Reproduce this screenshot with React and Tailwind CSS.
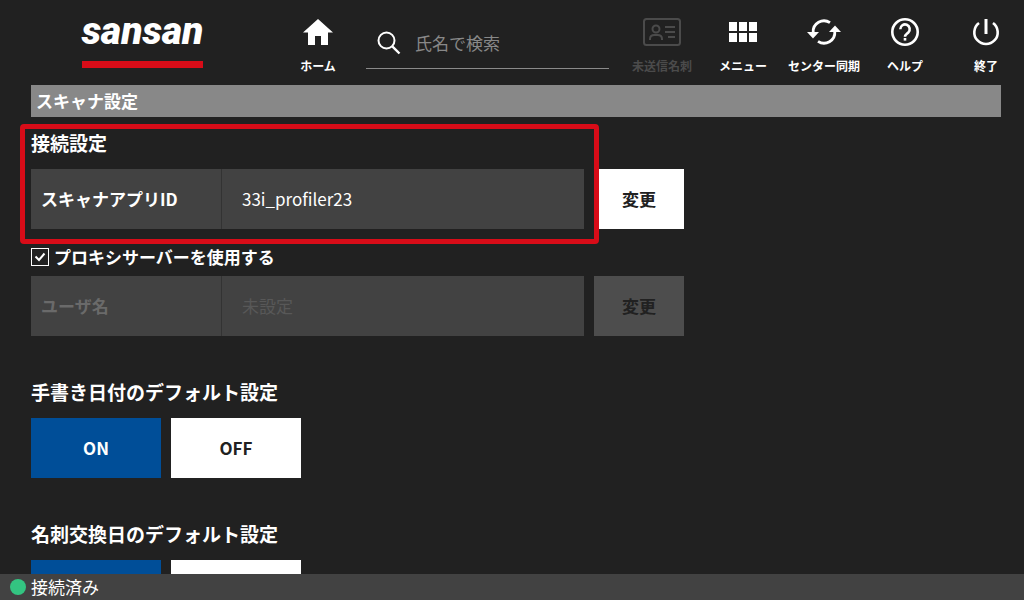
import { useState } from 'react'

function HomeIcon() {
  return (
    <svg width="32" height="32" viewBox="0 0 32 32" fill="currentColor" aria-hidden="true">
      <path d="M16 3 31 16.500h-5V29h-7v-9h-6v9H6V16.500H1z" />
    </svg>
  )
}

function SearchIcon() {
  return (
    <svg width="24" height="24" viewBox="0 0 24 24" fill="none" stroke="currentColor" strokeWidth="2" aria-hidden="true">
      <circle cx="9.500" cy="9.500" r="8" />
      <path d="M15.300 15.300 22.500 22.500" strokeWidth="2.400" />
    </svg>
  )
}

function CardIcon() {
  return (
    <svg width="38" height="32" viewBox="0 0 38 32" fill="none" stroke="currentColor" strokeWidth="2" aria-hidden="true">
      <rect x="1" y="3" width="36" height="26" rx="2.500" />
      <circle cx="13" cy="13" r="3.500" />
      <path d="M7 24v-1c0-2.800 2-4 4.500-4h3c2.500 0 4.500 1.200 4.500 4v1" />
      <path d="M22 11h10M22 16h10M25 21h7" />
    </svg>
  )
}

function MenuIcon() {
  return (
    <svg width="28" height="32" viewBox="0 0 28 32" fill="currentColor" aria-hidden="true">
      <path d="M0 6h8v9H0zM10 6h8v9h-8zM20 6h8v9h-8zM0 17h8v9H0zM10 17h8v9h-8zM20 17h8v9h-8z" />
    </svg>
  )
}

function SyncIcon() {
  return (
    <svg width="34" height="32" viewBox="0 0 34 32" fill="none" stroke="currentColor" strokeWidth="2.800" aria-hidden="true">
      <path d="M23 6.700A10.800 10.800 0 0 0 6.200 16.500" />
      <path d="M11 25.300A10.800 10.800 0 0 0 27.800 15.500" />
      <path d="M0 16h12l-6 6.500z" fill="currentColor" stroke="none" />
      <path d="M22 16h12l-6-6.500z" fill="currentColor" stroke="none" />
    </svg>
  )
}

function HelpIcon() {
  return (
    <svg width="32" height="32" viewBox="0 0 32 32" fill="none" stroke="currentColor" strokeWidth="2.600" aria-hidden="true">
      <circle cx="16" cy="16" r="12.700" />
      <path d="M11.300 13.200a4.700 4.700 0 1 1 8 3.300c-1.700 1.600-3.300 2.300-3.300 4.300" />
      <path d="M16 22v2.600" />
    </svg>
  )
}

function PowerIcon() {
  return (
    <svg width="32" height="32" viewBox="0 0 32 32" fill="none" stroke="currentColor" strokeWidth="2.600" aria-hidden="true">
      <path d="M9 7a11.700 11.700 0 1 0 14 0" />
      <path d="M16 3v15" strokeWidth="3" />
    </svg>
  )
}

const NAV = [
  { label: '未送信名刺', icon: CardIcon, disabled: true },
  { label: 'メニュー', icon: MenuIcon },
  { label: 'センター同期', icon: SyncIcon },
  { label: 'ヘルプ', icon: HelpIcon },
  { label: '終了', icon: PowerIcon },
]

function NavButton({ label, icon: Icon, disabled }) {
  return (
    <button
      type="button"
      disabled={disabled}
      className="flex w-[76px] shrink-0 flex-col items-center gap-[10px] pt-4 text-white disabled:text-[#4b4b4b]"
    >
      <Icon />
      <span className="whitespace-nowrap text-xs leading-4 font-bold">{label}</span>
    </button>
  )
}

function SettingRow({ label, value, disabled }) {
  return (
    <div className="flex h-[60px] gap-[10px]">
      <dl className="flex flex-1 bg-[#424242]">
        <dt
          className={`flex w-[191px] items-center border-r border-[#333] pl-[10px] font-bold ${
            disabled ? 'text-[#6a6a6a]' : 'text-white'
          }`}
        >
          {label}
        </dt>
        <dd className={`flex flex-1 items-center pl-5 ${disabled ? 'text-[#585858]' : 'text-white'}`}>{value}</dd>
      </dl>
      <button
        type="button"
        disabled={disabled}
        className="w-[90px] bg-white font-bold text-[#212121] disabled:bg-[#4d4d4d]"
      >
        変更
      </button>
    </div>
  )
}

function OnOffSetting({ title }) {
  const [on, setOn] = useState(true)
  const active = 'bg-[#004e98] text-white'
  const inactive = 'bg-white text-[#212121]'

  return (
    <section className="mt-[42px]">
      <h2 className="text-[19px] leading-7 font-bold">{title}</h2>
      <div className="mt-3 flex gap-[10px]">
        <button
          type="button"
          aria-pressed={on}
          onClick={() => setOn(true)}
          className={`h-[60px] w-[130px] font-bold ${on ? active : inactive}`}
        >
          ON
        </button>
        <button
          type="button"
          aria-pressed={!on}
          onClick={() => setOn(false)}
          className={`h-[60px] w-[130px] font-bold ${on ? inactive : active}`}
        >
          OFF
        </button>
      </div>
    </section>
  )
}

export default function App() {
  const [proxy, setProxy] = useState(true)

  return (
    <div
      lang="ja"
      className="flex h-screen flex-col bg-[#212121] font-['Noto_Sans_CJK_JP',sans-serif] text-[17px] leading-6 text-white"
    >
      <header className="flex h-[85px] shrink-0 items-start pl-[82px]">
        <a
          href="#"
          className="flex h-[68px] w-[121px] shrink-0 items-end justify-center border-b-[7px] border-[#d80c18] pb-2 font-['Roboto',sans-serif] text-[39px] leading-[44px] font-black italic"
        >
          sansan
        </a>
        <div className="ml-[77px]">
          <NavButton label="ホーム" icon={HomeIcon} />
        </div>
        <label className="mt-[19px] mr-[15px] ml-[10px] flex h-[50px] min-w-0 flex-1 items-center border-b border-[#8a8a8a] pb-[2px] pl-[11px]">
          <SearchIcon />
          <input
            type="search"
            aria-label="氏名で検索"
            placeholder="氏名で検索"
            className="ml-[14px] min-w-0 flex-1 bg-transparent outline-none placeholder:text-[#888]"
          />
        </label>
        <nav className="flex gap-[5px]">
          {NAV.map((item) => (
            <NavButton key={item.label} {...item} />
          ))}
        </nav>
      </header>

      <main className="min-h-0 flex-1 overflow-hidden pr-[23px] pl-[31px]">
        <h1 className="bg-[#888] px-[5px] py-1 font-bold">スキャナ設定</h1>

        <div className="w-[653px] max-w-full">
          <section className="relative mt-3">
            <h2 className="mb-3 text-[19px] leading-7 font-bold">接続設定</h2>
            <SettingRow label="スキャナアプリID" value="33i_profiler23" />
            {/* 強調枠 */}
            <div className="pointer-events-none absolute -top-[5px] right-[85px] -bottom-[15px] -left-[11px] rounded border-5 border-[#d80c18]" />
          </section>

          <label className="mt-[14px] mb-[5px] flex h-7 items-center gap-[5px] font-bold">
            <span className="relative flex">
              <input
                type="checkbox"
                checked={proxy}
                onChange={(e) => setProxy(e.target.checked)}
                className="size-[18px] appearance-none border border-white"
              />
              {proxy && (
                <svg
                  viewBox="0 0 18 18"
                  fill="none"
                  stroke="currentColor"
                  strokeWidth="2"
                  className="pointer-events-none absolute inset-0 size-[18px]"
                  aria-hidden="true"
                >
                  <path d="m4.500 8.500 3.500 3.500 5.500-6.500" />
                </svg>
              )}
            </span>
            プロキシサーバーを使用する
          </label>
          <SettingRow label="ユーザ名" value="未設定" disabled />
        </div>

        <OnOffSetting title="手書き日付のデフォルト設定" />
        <OnOffSetting title="名刺交換日のデフォルト設定" />
      </main>

      <footer className="flex h-[26px] shrink-0 items-center gap-[5px] bg-[#424242] pl-[10px]">
        <span className="size-4 rounded-full bg-[#33c481]" />
        接続済み
      </footer>
    </div>
  )
}
